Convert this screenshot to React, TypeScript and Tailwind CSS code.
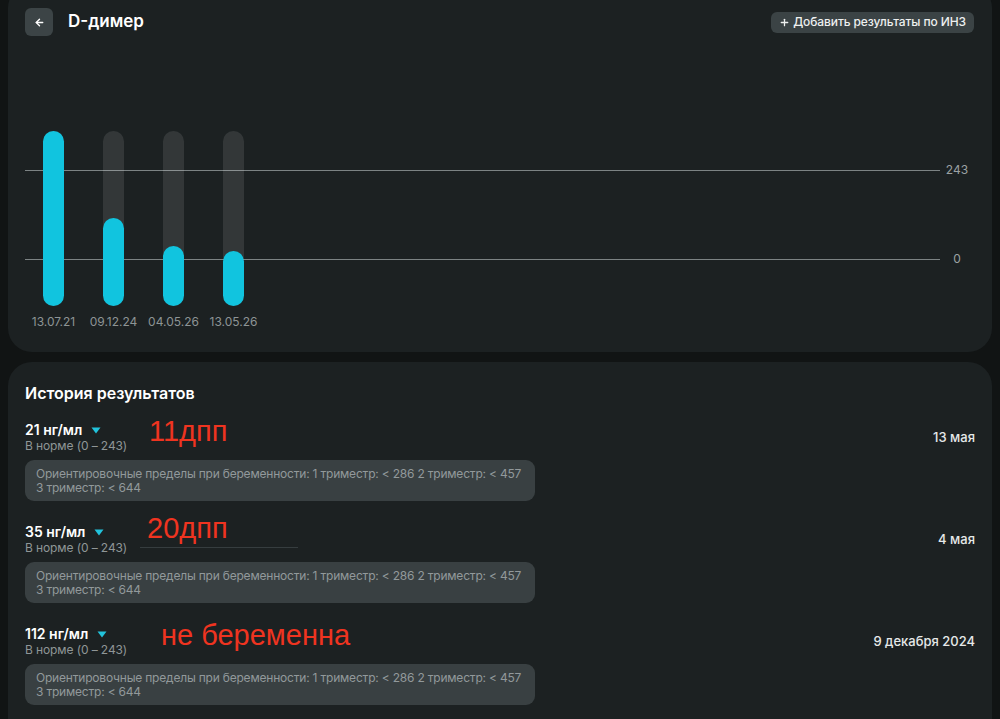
import { ArrowLeft, Plus } from "lucide-react";

type Bar = { date: string; fill: number };

type Result = {
  value: string;
  note: string;
  noteLeft: string;
  noteTop: string;
  date: string;
  underline?: boolean;
};

const bars: Bar[] = [
  { date: "13.07.21", fill: 175 },
  { date: "09.12.24", fill: 88 },
  { date: "04.05.26", fill: 60 },
  { date: "13.05.26", fill: 55 },
];

const results: Result[] = [
  { value: "21 нг/мл", note: "11дпп", noteLeft: "left-[124px]", noteTop: "-top-[5px]", date: "13 мая" },
  { value: "35 нг/мл", note: "20дпп", noteLeft: "left-[122px]", noteTop: "-top-[10px]", date: "4 мая", underline: true },
  { value: "112 нг/мл", note: "не беременна", noteLeft: "left-[136px]", noteTop: "-top-[5px]", date: "9 декабря 2024" },
];

const TriangleDown = () => (
  <svg width="10" height="7" viewBox="0 0 10 7" className="ml-[9px]">
    <path d="M0.5 0.5 H9.5 L5 6.5 Z" fill="#22c3dc" />
  </svg>
);

// grid lines sit behind the bars, labels on the right
const gridLines = [
  { label: "243", pos: "top-[33px]" },
  { label: "0", pos: "top-[122px]" },
];

const Chart = () => (
  <div className="relative mt-[95px] h-[175px]">
    {gridLines.map((line) => (
      <div
        key={line.label}
        className={`absolute left-0 right-[3px] flex h-[12px] items-center ${line.pos}`}
      >
        <div className="h-px flex-1 bg-[#7c8384]" />
        <span className="ml-[2px] w-[30px] text-center text-[12px] leading-none text-[#9ba1a2]">
          {line.label}
        </span>
      </div>
    ))}
    <div className="relative flex gap-[39px] pl-[18px]">
      {bars.map((bar) => (
        <div key={bar.date} className="flex w-[21px] flex-col items-center">
          <div className="flex h-[175px] w-[21px] flex-col justify-end rounded-full bg-white/10">
            <div
              className="w-full rounded-full bg-[#11c4df]"
              style={{ height: bar.fill }}
            />
          </div>
          <span className="mt-[9px] whitespace-nowrap text-[12px] leading-[14px] text-[#8d9495]">
            {bar.date}
          </span>
        </div>
      ))}
    </div>
  </div>
);

const ResultItem = ({ item }: { item: Result }) => (
  <div className="relative">
    <div className="flex items-center justify-between">
      <div>
        <div className="flex items-center text-[14px] font-semibold leading-[16px] text-white">
          {item.value}
          <TriangleDown />
        </div>
        <div className="text-[12px] leading-[15px] tracking-[-0.1px] text-[#8f9697]">
          В норме (0 – 243)
        </div>
      </div>
      <span className="mt-px text-[13px] font-medium text-[#e6e9e9]">{item.date}</span>
    </div>
    <span
      className={`absolute ${item.noteLeft} ${item.noteTop} font-['Liberation_Sans',Arial,sans-serif] text-[29px] leading-[29px] text-[#ef3420]`}
    >
      {item.note}
    </span>
    {item.underline && (
      <div className="absolute left-[115px] top-[23px] h-px w-[158px] bg-[#363d3f]" />
    )}
    <div className="mt-[7px] w-[510px] whitespace-nowrap rounded-[9px] bg-[#394042] px-[11px] pb-[6px] pt-[7px] text-[12px] leading-[14px] tracking-[-0.2px] text-[#92999b]">
      <div>Ориентировочные пределы при беременности: 1 триместр: &lt; 286 2 триместр: &lt; 457</div>
      <div>3 триместр: &lt; 644</div>
    </div>
  </div>
);

export default function App() {
  return (
    <div className="h-[719px] overflow-hidden bg-[#111414] px-2 font-['Inter','Noto_Sans',sans-serif]">
      <section className="-mt-4 rounded-[24px] bg-[#1c2122] px-[17px] pb-[22px] pt-6">
        <div className="flex h-7 items-center justify-between">
          <div className="flex items-center">
            <button className="flex h-7 w-7 items-center justify-center rounded-[6px] bg-[#3c4446] text-white">
              <ArrowLeft size={11} strokeWidth={3} />
            </button>
            <h1 className="ml-[15px] text-[17px] font-semibold text-white">D-димер</h1>
          </div>
          <button className="mr-[1px] flex h-[21px] items-center gap-[3px] rounded-[6px] bg-[#3b4345] pl-[8px] pr-[8px] text-[12px] font-medium tracking-[-0.1px] text-[#eef0f0]">
            <Plus size={11} strokeWidth={2.8} />
            Добавить результаты по ИНЗ
          </button>
        </div>
        <Chart />
        <div className="h-[24px]" />
      </section>

      <section className="mt-[10px] rounded-[24px] bg-[#1c2122] px-[17px] pb-10 pt-[21px]">
        <h2 className="text-[16px] font-semibold leading-[20px] text-white">
          История результатов
        </h2>
        <div className="mt-[19px] flex flex-col gap-[23px]">
          {results.map((item) => (
            <ResultItem key={item.value} item={item} />
          ))}
        </div>
      </section>
    </div>
  );
}
